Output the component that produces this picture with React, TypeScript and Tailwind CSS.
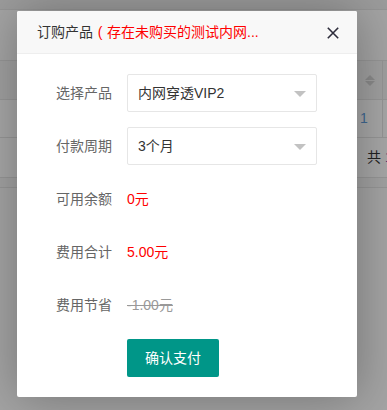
import React from 'react';

const font = { fontFamily: '"Liberation Sans", "Noto Sans CJK SC", sans-serif' };

const SelectBox: React.FC<{ value: string }> = ({ value }) => (
  <div className="relative flex items-center w-[190px] h-[38px] border border-[#e6e6e6] rounded-[2px] bg-white pl-[10px] text-[14px] text-[#333]">
    {value}
    <span className="absolute right-[10px] top-[16px] w-0 h-0 border-x-[6px] border-x-transparent border-t-[6px] border-t-[#c2c2c2]" />
  </div>
);

const Row: React.FC<{ label: string; children: React.ReactNode }> = ({ label, children }) => (
  <div className="flex items-center h-[38px] mb-[15px]">
    <label className="w-[110px] pr-[15px] text-right text-[14px] text-[#666]">{label}</label>
    {children}
  </div>
);

export default function App() {
  return (
    <div className="relative w-[387px] h-[410px] overflow-hidden bg-[#a4a4a4]" style={font}>
      {/* page behind the overlay */}
      <div className="flex flex-col">
        <div className="h-[10px] bg-[#9c9c9c] border-b border-[#959595]" />
        <div className="h-[50px]" />
        <div className="flex h-[40px] bg-[#a0a0a0] border-y border-[#969696]">
          <div className="flex-1" />
          <div className="w-[25px] flex flex-col items-center justify-center gap-[1px]">
            <span className="w-0 h-0 border-x-[5px] border-x-transparent border-b-[5px] border-b-[#8a8a8a]" />
            <span className="w-0 h-0 border-x-[5px] border-x-transparent border-t-[5px] border-t-[#8a8a8a]" />
          </div>
          <div className="w-[5px] border-l border-[#969696]" />
        </div>
        <div className="flex h-[38px] bg-[#a7a7a7] border-b border-[#969696]">
          <div className="flex-1" />
          <div className="w-[25px] flex items-center pl-[3px] text-[14px] text-[#3f6891]">1</div>
          <div className="w-[5px] border-l border-[#969696]" />
        </div>
        <div className="flex h-[40px] bg-[#a7a7a7] border-b border-[#969696]">
          <div className="flex-1" />
          <div className="w-[20px] flex items-center text-[14px] text-[#222] whitespace-nowrap overflow-hidden">
            共<span className="text-[#5a2a70] ml-[4px]">1</span>
          </div>
        </div>
        <div className="h-[10px] bg-[#a2a2a2] border-b border-[#969696]" />
      </div>

      {/* dialog */}
      <div className="absolute left-[17px] top-[11px] w-[340px] bg-white rounded-[2px] shadow-[1px_1px_50px_rgba(0,0,0,0.3)]">
        <div className="relative h-[43px] leading-[42px] bg-[#f8f8f8] border-b border-[#eee] pl-[20px] pr-[80px] text-[14px] text-[#333] whitespace-nowrap overflow-hidden rounded-t-[2px]">
          订购产品<span className="text-[#f00]"><span className="inline-block w-[14px] text-center">(</span>存在未购买的测试内网...</span>
          <svg className="absolute right-[18px] top-[16px]" width="12" height="12" viewBox="0 0 12 12">
            <path d="M0.8 0.8 L11.2 11.2 M11.2 0.8 L0.8 11.2" stroke="#2e2d3c" strokeWidth="1.6" />
          </svg>
        </div>
        <div className="pt-[20px] pb-[20px]">
          <Row label="选择产品"><SelectBox value="内网穿透VIP2" /></Row>
          <Row label="付款周期"><SelectBox value="3个月" /></Row>
          <Row label="可用余额"><span className="text-[14px] text-[#f00]">0元</span></Row>
          <Row label="费用合计"><span className="text-[14px] text-[#f00]">5.00元</span></Row>
          <Row label="费用节省"><span className="text-[14px] text-[#999] line-through">-1.00元</span></Row>
          <div className="flex h-[38px]">
            <div className="w-[110px]" />
            <button className="w-[92px] h-[38px] bg-[#009688] text-white text-[14px] rounded-[2px]">确认支付</button>
          </div>
        </div>
      </div>
    </div>
  );
}
